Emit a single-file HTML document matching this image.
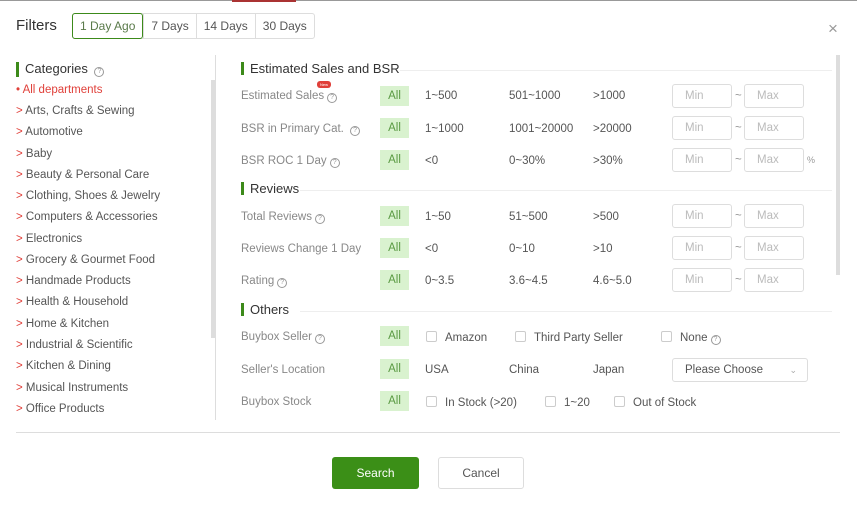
<!DOCTYPE html><html><head><style>
*{margin:0;padding:0;box-sizing:border-box}
body{width:857px;height:513px;background:#fff;font-family:"Liberation Sans",sans-serif;position:relative;overflow:hidden;color:#555}
.a{position:absolute;white-space:nowrap}
.tabs{left:72px;top:13px;height:26px;display:flex;border:1px solid #ddd;border-radius:3px}
.tabs div{font-size:12px;padding:0 7px;line-height:24px;border-left:1px solid #ddd;color:#555}
.tabs div.on{border:1px solid #3c8a1a;color:#5a7a4a;border-radius:3px;margin:-1px 0 -1px -1px;line-height:24px}
.h{font-size:13px;color:#333;padding-left:6px;border-left:3px solid #3c8a1a;line-height:13px}
.cat{left:16px;font-size:11.5px;color:#555}
.cat b{color:#e0403a;font-weight:normal}
.lbl{left:241px;font-size:11.5px;color:#888;margin-top:1px}
.all{left:380px;width:29px;height:20px;background:#d9f2cf;color:#5a9a43;font-size:11.5px;text-align:center;line-height:20px}
.v{font-size:11.5px;color:#555;margin-top:1px}
.inp{width:60px;height:24px;border:1px solid #ddd;border-radius:3px;font-size:11.5px;color:#bbb;padding-left:12px;line-height:22px}
.q{display:inline-block;width:10px;height:10px;border:1px solid #999;border-radius:50%;font-size:7px;line-height:8px;text-align:center;color:#999;vertical-align:0px;margin-left:3px}
.cb{display:inline-block;width:11px;height:11px;border:1px solid #ccc;border-radius:2px;vertical-align:-1px;margin-right:8px}
.line{background:#eee}
.t{left:735px;color:#999;font-size:11.5px}
</style></head><body>
<div class="a" style="left:0;top:0;width:857px;height:1px;background:#999"></div>
<div class="a" style="left:232px;top:0;width:64px;height:2px;background:#a33"></div>
<div class="a" style="left:16px;top:17px;font-size:15px;color:#333">Filters</div>
<div class="a tabs"><div class="on">1 Day Ago</div><div>7 Days</div><div>14 Days</div><div>30 Days</div></div>
<div class="a" style="left:828px;top:19px;font-size:17px;color:#999">×</div>
<div class="a h" style="left:16px;top:62px">Categories <span class="q">?</span></div>
<div class="a" style="left:215px;top:55px;width:1px;height:365px;background:#ddd"></div>
<div class="a" style="left:211px;top:80px;width:4px;height:258px;background:#ddd"></div>
<div class="a cat" style="top:84px"><b>• All departments</b></div>
<div class="a cat" style="top:105px"><b>&gt;</b> Arts, Crafts &amp; Sewing</div>
<div class="a cat" style="top:126px"><b>&gt;</b> Automotive</div>
<div class="a cat" style="top:148px"><b>&gt;</b> Baby</div>
<div class="a cat" style="top:169px"><b>&gt;</b> Beauty &amp; Personal Care</div>
<div class="a cat" style="top:190px"><b>&gt;</b> Clothing, Shoes &amp; Jewelry</div>
<div class="a cat" style="top:211px"><b>&gt;</b> Computers &amp; Accessories</div>
<div class="a cat" style="top:233px"><b>&gt;</b> Electronics</div>
<div class="a cat" style="top:254px"><b>&gt;</b> Grocery &amp; Gourmet Food</div>
<div class="a cat" style="top:275px"><b>&gt;</b> Handmade Products</div>
<div class="a cat" style="top:296px"><b>&gt;</b> Health &amp; Household</div>
<div class="a cat" style="top:318px"><b>&gt;</b> Home &amp; Kitchen</div>
<div class="a cat" style="top:339px"><b>&gt;</b> Industrial &amp; Scientific</div>
<div class="a cat" style="top:360px"><b>&gt;</b> Kitchen &amp; Dining</div>
<div class="a cat" style="top:382px"><b>&gt;</b> Musical Instruments</div>
<div class="a cat" style="top:403px"><b>&gt;</b> Office Products</div>
<div class="a" style="left:836px;top:55px;width:4px;height:220px;background:#ddd"></div>
<div class="a h" style="left:241px;top:62px">Estimated Sales and BSR</div>
<div class="a line" style="left:400px;top:70px;width:432px;height:1px"></div>
<div class="a h" style="left:241px;top:182px">Reviews</div>
<div class="a line" style="left:300px;top:190px;width:532px;height:1px"></div>
<div class="a h" style="left:241px;top:303px">Others</div>
<div class="a line" style="left:300px;top:311px;width:532px;height:1px"></div>
<div class="a" style="left:317px;top:81px;width:14px;height:7px;background:#e0403a;border-radius:3px;font-size:4px;color:#fff;text-align:center;line-height:7px">New</div>

<div class="a lbl" style="top:89px">Estimated Sales<span class="q">?</span></div>
<div class="a lbl" style="top:122px">BSR in Primary Cat. <span class="q">?</span></div>
<div class="a lbl" style="top:154px">BSR ROC 1 Day<span class="q">?</span></div>
<div class="a lbl" style="top:210px">Total Reviews<span class="q">?</span></div>
<div class="a lbl" style="top:242px">Reviews Change 1 Day</div>
<div class="a lbl" style="top:274px">Rating<span class="q">?</span></div>
<div class="a lbl" style="top:330px">Buybox Seller<span class="q">?</span></div>
<div class="a lbl" style="top:363px">Seller's Location</div>
<div class="a lbl" style="top:395px">Buybox Stock</div>

<div class="a all" style="top:86px">All</div>
<div class="a all" style="top:118px">All</div>
<div class="a all" style="top:150px">All</div>
<div class="a all" style="top:206px">All</div>
<div class="a all" style="top:238px">All</div>
<div class="a all" style="top:270px">All</div>
<div class="a all" style="top:326px">All</div>
<div class="a all" style="top:359px">All</div>
<div class="a all" style="top:391px">All</div>

<div class="a v" style="left:425px;top:89px">1~500</div><div class="a v" style="left:509px;top:89px">501~1000</div><div class="a v" style="left:593px;top:89px">&gt;1000</div>
<div class="a v" style="left:425px;top:122px">1~1000</div><div class="a v" style="left:509px;top:122px">1001~20000</div><div class="a v" style="left:593px;top:122px">&gt;20000</div>
<div class="a v" style="left:425px;top:154px">&lt;0</div><div class="a v" style="left:509px;top:154px">0~30%</div><div class="a v" style="left:593px;top:154px">&gt;30%</div>
<div class="a v" style="left:425px;top:210px">1~50</div><div class="a v" style="left:509px;top:210px">51~500</div><div class="a v" style="left:593px;top:210px">&gt;500</div>
<div class="a v" style="left:425px;top:242px">&lt;0</div><div class="a v" style="left:509px;top:242px">0~10</div><div class="a v" style="left:593px;top:242px">&gt;10</div>
<div class="a v" style="left:425px;top:274px">0~3.5</div><div class="a v" style="left:509px;top:274px">3.6~4.5</div><div class="a v" style="left:593px;top:274px">4.6~5.0</div>

<div class="a inp" style="left:672px;top:84px">Min</div><div class="a t" style="top:90px">~</div><div class="a inp" style="left:744px;top:84px">Max</div>
<div class="a inp" style="left:672px;top:116px">Min</div><div class="a t" style="top:122px">~</div><div class="a inp" style="left:744px;top:116px">Max</div>
<div class="a inp" style="left:672px;top:148px">Min</div><div class="a t" style="top:154px">~</div><div class="a inp" style="left:744px;top:148px">Max</div><div class="a" style="left:807px;top:155px;font-size:9px;color:#999">%</div>
<div class="a inp" style="left:672px;top:204px">Min</div><div class="a t" style="top:210px">~</div><div class="a inp" style="left:744px;top:204px">Max</div>
<div class="a inp" style="left:672px;top:236px">Min</div><div class="a t" style="top:242px">~</div><div class="a inp" style="left:744px;top:236px">Max</div>
<div class="a inp" style="left:672px;top:268px">Min</div><div class="a t" style="top:274px">~</div><div class="a inp" style="left:744px;top:268px">Max</div>

<div class="a v" style="left:426px;top:330px"><span class="cb"></span>Amazon</div>
<div class="a v" style="left:515px;top:330px"><span class="cb"></span>Third Party Seller</div>
<div class="a v" style="left:661px;top:330px"><span class="cb"></span>None<span class="q">?</span></div>
<div class="a v" style="left:425px;top:363px">USA</div><div class="a v" style="left:509px;top:363px">China</div><div class="a v" style="left:593px;top:363px">Japan</div>
<div class="a inp" style="left:672px;top:358px;width:136px;height:24px;color:#555">Please Choose<span style="position:absolute;right:10px;top:0;color:#aaa;font-size:9px">&#8964;</span></div>
<div class="a v" style="left:426px;top:395px"><span class="cb"></span>In Stock (&gt;20)</div>
<div class="a v" style="left:545px;top:395px"><span class="cb"></span>1~20</div>
<div class="a v" style="left:614px;top:395px"><span class="cb"></span>Out of Stock</div>

<div class="a" style="left:16px;top:432px;width:824px;height:1px;background:#ddd"></div>
<div class="a" style="left:332px;top:457px;width:87px;height:32px;background:#3b8f17;border-radius:3px;color:#fff;font-size:12px;text-align:center;line-height:32px">Search</div>
<div class="a" style="left:438px;top:457px;width:86px;height:32px;border:1px solid #ddd;border-radius:3px;color:#555;font-size:12px;text-align:center;line-height:30px">Cancel</div>
</body></html>
